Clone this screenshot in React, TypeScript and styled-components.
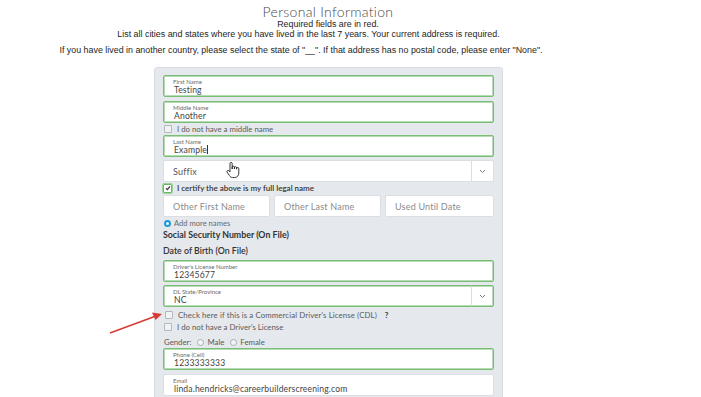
import React from "react";
import styled, { createGlobalStyle } from "styled-components";

const Global = createGlobalStyle`
  html, body { margin: 0; padding: 0; background: #ffffff; }
  body { width: 701px; height: 397px; overflow: hidden; font-family: Lato, "Open Sans", sans-serif; }
`;

const Page = styled.div`
  position: relative;
  width: 701px;
  height: 397px;
  overflow: hidden;
`;

const Header = styled.header`
  padding-top: 5px;
  display: flex;
  flex-direction: column;
  align-items: stretch;
`;

const Title = styled.h1`
  margin: 0;
  padding-right: 45px;
  text-align: center;
  font-family: Lato, sans-serif;
  font-weight: 300;
  font-size: 14px;
  line-height: 14px;
  color: #4a4a4a;
  letter-spacing: 0.3px;
`;

const Note = styled.p<{ $shift: number; $mt?: number; $lh: number }>`
  margin: ${(p) => p.$mt ?? 0}px 0 0 0;
  padding-right: ${(p) => p.$shift}px;
  text-align: center;
  font-family: "Liberation Sans", Arial, sans-serif;
  font-size: 8.9px;
  line-height: ${(p) => p.$lh}px;
  color: #1e1e1e;
  white-space: nowrap;
`;

const Panel = styled.section`
  margin: 11px 0 0 154px;
  width: 349px;
  height: 340px;
  box-sizing: border-box;
  background: #e5e8ec;
  border: 1px solid #d9dde2;
  border-radius: 3px;
  padding: 7px 8px 0 8px;
  display: flex;
  flex-direction: column;
`;

const Field = styled.div<{ $ok?: boolean; $mt?: number }>`
  position: relative;
  margin-top: ${(p) => p.$mt ?? 0}px;
  height: 22px;
  box-sizing: border-box;
  background: #ffffff;
  border: 1px solid ${(p) => (p.$ok ? "#79bd76" : "#dcdfe2")};
  box-shadow: ${(p) => (p.$ok ? "inset 0 0 0 1px #b6dcb3" : "none")};
  border-radius: 2px;
  display: flex;
  align-items: stretch;
`;

const FieldBody = styled.div`
  flex: 1;
  padding: 2px 0 0 9px;
  display: flex;
  flex-direction: column;
`;

const Label = styled.span`
  font-size: 6px;
  line-height: 7px;
  color: #6b6b6b;
`;

const Value = styled.span`
  font-size: 8.6px;
  line-height: 10px;
  color: #444;
  padding-left: 1px;
  letter-spacing: 0.15px;
`;

const Caret = styled.span`
  display: inline-block;
  width: 1px;
  height: 9px;
  background: #333;
  vertical-align: -1px;
`;

const Placeholder = styled.span`
  flex: 1;
  display: flex;
  align-items: center;
  padding-left: 9px;
  font-size: 9px;
  color: #555;
  letter-spacing: 0.2px;
`;

const ArrowBox = styled.div`
  width: 21px;
  border-left: 1px solid #dcdfe2;
  display: flex;
  align-items: center;
  justify-content: center;
`;

const CheckRow = styled.label<{ $mt?: number; $h: number; $indent?: number; $strong?: boolean; $wide?: boolean }>`
  margin-top: ${(p) => p.$mt ?? 0}px;
  height: ${(p) => p.$h}px;
  padding-left: ${(p) => p.$indent ?? 1}px;
  display: flex;
  align-items: center;
  gap: 3px;
  font-size: ${(p) => (p.$strong ? 8 : 7.8)}px;
  font-weight: ${(p) => (p.$strong ? 600 : 400)};
  letter-spacing: ${(p) => (p.$wide ? 0.12 : 0)}px;
  color: ${(p) => (p.$strong ? "#333" : "#5a5a5a")};
  white-space: nowrap;
`;

const Box = styled.span<{ $on?: boolean }>`
  width: ${(p) => (p.$on ? 7 : 6)}px;
  height: ${(p) => (p.$on ? 7 : 6)}px;
  border: 1px solid ${(p) => (p.$on ? "#6fb46c" : "#b4b8bc")};
  outline: ${(p) => (p.$on ? "1px solid #9fd19c" : "none")};
  background: ${(p) => (p.$on ? "#ffffff" : "#f1f2f3")};
  border-radius: 1px;
  display: flex;
  align-items: center;
  justify-content: center;
  margin-right: 2px;
`;

const NameRow = styled.div`
  margin-top: 1px;
  height: 22px;
  display: grid;
  grid-template-columns: 107px 107px 1fr;
  gap: 4px;
`;

const Plain = styled.div`
  background: #fff;
  border: 1px solid #dcdfe2;
  border-radius: 2px;
  display: flex;
  align-items: center;
  padding-left: 9px;
  font-size: 9px;
  color: #8a8a8a;
  letter-spacing: 0.2px;
`;

const AddMore = styled.div`
  margin-top: 1px;
  height: 10px;
  display: flex;
  align-items: center;
  gap: 3px;
  font-size: 7.6px;
  color: #6a6a6a;
  padding-left: 1px;
`;

const Dot = styled.span`
  width: 3px;
  height: 3px;
  border: 2px solid #1d9ad6;
  border-radius: 50%;
  background: #e8f6fd;
`;

const Heading = styled.div<{ $mt: number; $bold?: boolean }>`
  margin-top: ${(p) => p.$mt}px;
  height: 12px;
  display: flex;
  align-items: center;
  font-size: 8.8px;
  font-weight: ${(p) => (p.$bold ? 700 : 600)};
  color: #333;
`;

const Help = styled.b`
  margin-left: 5px;
  color: #333;
  font-weight: 700;
`;

const GenderRow = styled.div`
  margin-top: 4px;
  height: 12px;
  display: flex;
  align-items: center;
  gap: 3px;
  font-size: 7.8px;
  color: #5a5a5a;
  padding-left: 1px;
`;

const Radio = styled.span`
  width: 5px;
  height: 5px;
  border: 1px solid #a8adb2;
  border-radius: 50%;
  background: #f4f5f6;
  margin-left: 3px;
`;

const Overlay = styled.svg`
  position: absolute;
  pointer-events: none;
`;

const Chevron = () => (
  <svg width="7" height="5" viewBox="0 0 7 5">
    <polyline points="1,1 3.5,3.5 6,1" fill="none" stroke="#777" strokeWidth="1" />
  </svg>
);

const Tick = () => (
  <svg width="6" height="6" viewBox="0 0 6 6">
    <polyline points="1,3.2 2.4,4.6 5,1.4" fill="none" stroke="#333" strokeWidth="1.2" />
  </svg>
);

export default function App() {
  return (
    <Page>
      <Global />
      <Header>
        <Title>Personal Information</Title>
        <Note $shift={45} $lh={10}>Required fields are in red.</Note>
        <Note $shift={84} $lh={11}>
          List all cities and states where you have lived in the last 7 years. Your current address is required.
        </Note>
        <Note $shift={99} $lh={11} $mt={5}>
          If you have lived in another country, please select the state of "__". If that address has no postal code, please enter "None".
        </Note>
      </Header>
      <Panel>
        <Field $ok>
          <FieldBody>
            <Label>First Name</Label>
            <Value>Testing</Value>
          </FieldBody>
        </Field>
        <Field $ok $mt={4}>
          <FieldBody>
            <Label>Middle Name</Label>
            <Value>Another</Value>
          </FieldBody>
        </Field>
        <CheckRow $h={11}>
          <Box />I do not have a middle name
        </CheckRow>
        <Field $ok $mt={1}>
          <FieldBody>
            <Label>Last Name</Label>
            <Value>
              Example<Caret />
            </Value>
          </FieldBody>
        </Field>
        <Field $mt={3}>
          <Placeholder>Suffix</Placeholder>
          <ArrowBox>
            <Chevron />
          </ArrowBox>
        </Field>
        <CheckRow $h={12} $strong $indent={0}>
          <Box $on>
            <Tick />
          </Box>
          I certify the above is my full legal name
        </CheckRow>
        <NameRow>
          <Plain>Other First Name</Plain>
          <Plain>Other Last Name</Plain>
          <Plain>Used Until Date</Plain>
        </NameRow>
        <AddMore>
          <Dot />
          Add more names
        </AddMore>
        <Heading $mt={0} $bold>Social Security Number (On File)</Heading>
        <Heading $mt={4}>Date of Birth (On File)</Heading>
        <Field $ok $mt={4}>
          <FieldBody>
            <Label>Driver's License Number</Label>
            <Value>12345677</Value>
          </FieldBody>
        </Field>
        <Field $ok $mt={3}>
          <FieldBody>
            <Label>DL State/Province</Label>
            <Value>NC</Value>
          </FieldBody>
          <ArrowBox>
            <Chevron />
          </ArrowBox>
        </Field>
        <CheckRow $h={12} $mt={2} $indent={2} $wide>
          <Box />
          <span>Check here if this is a Commercial Driver's License (CDL)</span>
          <Help>?</Help>
        </CheckRow>
        <CheckRow $h={11}>
          <Box />I do not have a Driver's License
        </CheckRow>
        <GenderRow>
          Gender:
          <Radio />
          Male
          <Radio />
          Female
        </GenderRow>
        <Field $ok>
          <FieldBody>
            <Label>Phone (Cell)</Label>
            <Value>1233333333</Value>
          </FieldBody>
        </Field>
        <Field $mt={4}>
          <FieldBody>
            <Label>Email</Label>
            <Value>linda.hendricks@careerbuilderscreening.com</Value>
          </FieldBody>
        </Field>
      </Panel>

      <Overlay style={{ left: 106, top: 308, width: 60, height: 30 }} viewBox="0 0 60 30">
        <line x1="4" y1="25" x2="50" y2="8" stroke="#d83a35" strokeWidth="1.6" />
        <polygon points="56,6 46,4.5 49.5,12" fill="#d83a35" />
      </Overlay>

      <Overlay style={{ left: 225, top: 161, width: 16, height: 18 }} viewBox="0 0 16 18">
        <path
          d="M5 9 V2.5 a1.1 1.1 0 0 1 2.2 0 V8 V6.2 a1.1 1.1 0 0 1 2.2 0 V8 V6.8 a1.1 1.1 0 0 1 2.2 0 V8.2 V7.6 a1.1 1.1 0 0 1 2.2 0 V12 c0 2.5 -1.5 4.5 -4 4.5 H7.6 c-1.5 0 -2.4 -0.8 -3.2 -2 L2 11 a1.2 1.2 0 0 1 1.8 -1.4 L5 11 Z"
          fill="#ffffff"
          stroke="#222"
          strokeWidth="0.9"
          strokeLinejoin="round"
        />
      </Overlay>
    </Page>
  );
}
